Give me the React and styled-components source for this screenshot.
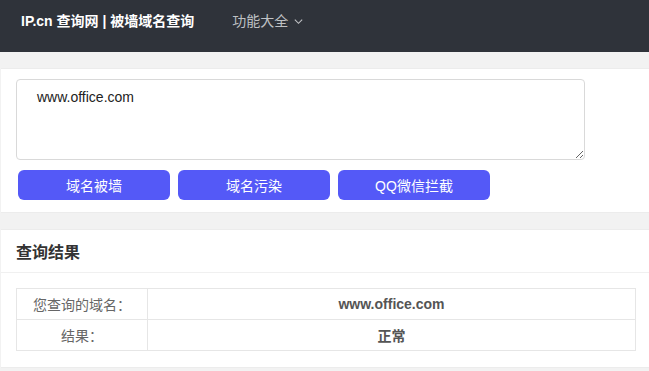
import React from "react";
import styled, { createGlobalStyle } from "styled-components";

const GlobalStyle = createGlobalStyle`
    body {
        margin: 0;
        background: #f2f2f2;
        font-family: "Liberation Sans", "Noto Sans CJK SC", sans-serif;
        font-size: 14px;
        color: #333;
    }
`;

const Header = styled.div`
    box-sizing: border-box;
    height: 52px;
    background: #2f333a;
    display: flex;
    align-items: flex-start;
    padding: 13px 0 0 21px;
    line-height: 16px;
    gap: 38px;
`;

const Brand = styled.div`
    color: #fff;
    font-size: 14px;
    font-weight: bold;
`;

const Menu = styled.div`
    color: #bfc1c4;
    font-size: 14px;
    display: flex;
    align-items: center;
    gap: 5px;
`;

const Main = styled.div`
    padding: 16px 0 0 1px;
    display: flex;
    flex-direction: column;
    gap: 16px;
`;

const Card = styled.div`
    background: #fff;
    border-top: 1px solid #ececec;
    border-bottom: 1px solid #ececec;
    padding: ${(p) => p.$pad || "0"};
`;

const TextArea = styled.textarea`
    display: block;
    box-sizing: border-box;
    width: 569px;
    height: 81px;
    border: 1px solid #d9d9d9;
    border-radius: 4px;
    padding: 9px 20px;
    font-family: "Liberation Sans", "Noto Sans CJK SC", sans-serif;
    font-size: 14px;
    color: #222;
    outline: none;
`;

const Buttons = styled.div`
    display: flex;
    gap: 8px;
    margin: 10px 0 0 2px;
`;

const Button = styled.button`
    width: 152px;
    height: 30px;
    border: none;
    border-radius: 6px;
    background: #5459f7;
    color: #fff;
    font-family: "Liberation Sans", "Noto Sans CJK SC", sans-serif;
    font-size: 14px;
    cursor: pointer;
`;

const CardTitle = styled.div`
    height: 42px;
    display: flex;
    align-items: center;
    padding-left: 15px;
    font-size: 16px;
    font-weight: bold;
    color: #333;
    border-bottom: 1px solid #f0f0f0;
`;

const CardBody = styled.div`
    padding: 15px 13px 16px 15px;
`;

const Table = styled.table`
    width: 100%;
    border-collapse: collapse;
`;

const Cell = styled.td`
    height: 30px;
    border: 1px solid #e6e6e6;
    text-align: center;
    font-size: 14px;
    color: ${(p) => (p.$value ? "#555" : "#666")};
    font-weight: ${(p) => (p.$value ? "bold" : "normal")};
    width: ${(p) => (p.$value ? "auto" : "130px")};
    padding: 0;
`;

const rows = [
    { label: "您查询的域名：", value: "www.office.com" },
    { label: "结果：", value: "正常" },
];

const App = () => {
    return (
        <>
            <GlobalStyle />
            <Header>
                <Brand>IP.cn 查询网 | 被墙域名查询</Brand>
                <Menu>
                    功能大全
                    <svg width="11" height="11" viewBox="0 0 12 12" fill="none">
                        <path d="M2 4l4 4 4-4" stroke="#bfc1c4" strokeWidth="1.2" />
                    </svg>
                </Menu>
            </Header>
            <Main>
                <Card $pad="10px 15px 12px 15px">
                    <TextArea defaultValue="www.office.com" />
                    <Buttons>
                        <Button>域名被墙</Button>
                        <Button>域名污染</Button>
                        <Button>QQ微信拦截</Button>
                    </Buttons>
                </Card>
                <Card>
                    <CardTitle>查询结果</CardTitle>
                    <CardBody>
                        <Table>
                            <tbody>
                                {rows.map((r) => (
                                    <tr key={r.label}>
                                        <Cell>{r.label}</Cell>
                                        <Cell $value>{r.value}</Cell>
                                    </tr>
                                ))}
                            </tbody>
                        </Table>
                    </CardBody>
                </Card>
            </Main>
        </>
    );
};

export default App;
